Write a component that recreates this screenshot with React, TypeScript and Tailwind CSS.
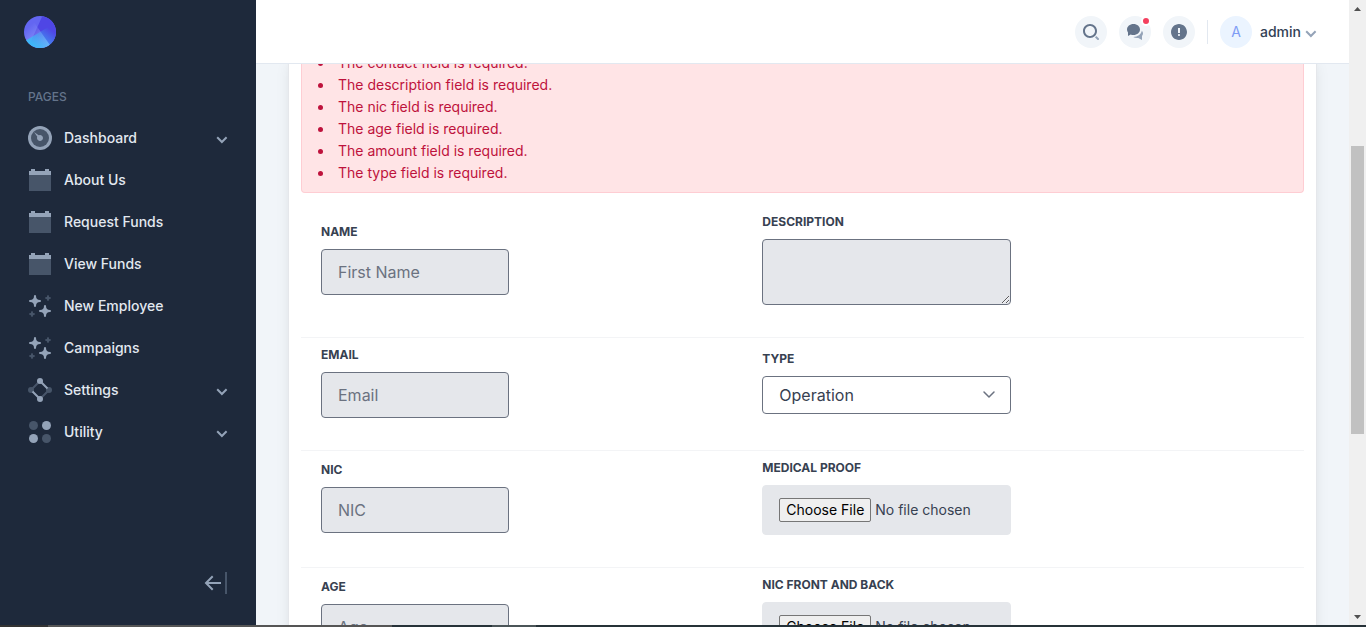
import React, { useId } from "react";

function Logo() {
  return (
    <svg width="32" height="32" viewBox="0 0 32 32" aria-hidden="true">
      <defs>
        <linearGradient x1="28.538%" y1="20.229%" x2="100%" y2="108.156%" id="logo-a">
          <stop stopColor="#A5B4FC" stopOpacity="0" offset="0%" />
          <stop stopColor="#A5B4FC" offset="100%" />
        </linearGradient>
        <linearGradient x1="88.638%" y1="29.267%" x2="22.42%" y2="100%" id="logo-b">
          <stop stopColor="#38BDF8" stopOpacity="0" offset="0%" />
          <stop stopColor="#38BDF8" offset="100%" />
        </linearGradient>
      </defs>
      <rect fill="#6366F1" width="32" height="32" rx="16" />
      <path d="M18.277.16C26.035 1.267 32 7.938 32 16c0 8.837-7.163 16-16 16a15.937 15.937 0 01-10.426-3.863L18.277.161z" fill="#4F46E5" />
      <path d="M7.404 2.503l18.339 26.19A15.93 15.93 0 0116 32C7.163 32 0 24.837 0 16 0 10.327 2.952 5.344 7.404 2.503z" fill="url(#logo-a)" />
      <path d="M2.223 24.14L29.777 7.86A15.926 15.926 0 0132 16c0 8.837-7.163 16-16 16-5.864 0-10.991-3.154-13.777-7.86z" fill="url(#logo-b)" />
    </svg>
  );
}

const LIGHT = "#94a3b8";
const DARK = "#475569";

const icons = {
  gauge: (
    <>
      <circle cx="12" cy="12" r="12" fill={LIGHT} />
      <circle cx="12" cy="12" r="9" fill={DARK} />
      <path fill={LIGHT} d="M12 15c-1.654 0-3-1.346-3-3 0-.462.113-.894.3-1.285L6 6l4.714 3.301A2.973 2.973 0 0112 9c1.654 0 3 1.346 3 3s-1.346 3-3 3z" />
    </>
  ),
  calendar: (
    <>
      <path fill={DARK} d="M1 3h22v20H1z" />
      <path fill={LIGHT} d="M21 3h2v4H1V3h2V1h4v2h10V1h4v2z" />
    </>
  ),
  sparkles: (
    <>
      <path fill={DARK} d="M20 7a.75.75 0 01-.75-.75 1.5 1.5 0 00-1.5-1.5.75.75 0 110-1.5 1.5 1.5 0 001.5-1.5.75.75 0 111.5 0 1.5 1.5 0 001.5 1.5.75.75 0 110 1.5 1.5 1.5 0 00-1.5 1.5A.75.75 0 0120 7zM4 23a.75.75 0 01-.75-.75 1.5 1.5 0 00-1.5-1.5.75.75 0 110-1.5 1.5 1.5 0 001.5-1.5.75.75 0 111.5 0 1.5 1.5 0 001.5 1.5.75.75 0 110 1.5 1.5 1.5 0 00-1.5 1.5A.75.75 0 014 23z" />
      <path fill={LIGHT} d="M17 23a1 1 0 01-1-1 4 4 0 00-4-4 1 1 0 010-2 4 4 0 004-4 1 1 0 012 0 4 4 0 004 4 1 1 0 010 2 4 4 0 00-4 4 1 1 0 01-1 1zM7 13a1 1 0 01-1-1 4 4 0 00-4-4 1 1 0 110-2 4 4 0 004-4 1 1 0 112 0 4 4 0 004 4 1 1 0 010 2 4 4 0 00-4 4 1 1 0 01-1 1z" />
    </>
  ),
  nodes: (
    <>
      <path stroke={DARK} strokeWidth="2" fill="none" d="M12 3L3 12M21 12l-9 9" />
      <circle cx="3" cy="12" r="3" fill={DARK} />
      <circle cx="21" cy="12" r="3" fill={DARK} />
      <path stroke={LIGHT} strokeWidth="2" fill="none" d="M12 3l7.5 7.5M12 21l-7.5-7.5" />
      <circle cx="12" cy="3" r="3" fill={LIGHT} />
      <circle cx="12" cy="21" r="3" fill={LIGHT} />
    </>
  ),
  dots: (
    <>
      <circle cx="5.5" cy="5.5" r="4.5" fill={DARK} />
      <circle cx="18.5" cy="18.5" r="4.5" fill={DARK} />
      <circle cx="18.5" cy="5.5" r="4.5" fill={LIGHT} />
      <circle cx="5.5" cy="18.5" r="4.5" fill={LIGHT} />
    </>
  ),
};

function Chevron() {
  return (
    <svg className="h-3 w-3 shrink-0 fill-[#94a3b8]" viewBox="0 0 12 12" aria-hidden="true">
      <path d="M5.9 11.4L.5 6l1.4-1.4 4 4 4-4L11.3 6z" />
    </svg>
  );
}

const links: { label: string; icon: keyof typeof icons; expandable?: boolean }[] = [
  { label: "Dashboard", icon: "gauge", expandable: true },
  { label: "About Us", icon: "calendar" },
  { label: "Request Funds", icon: "calendar" },
  { label: "View Funds", icon: "calendar" },
  { label: "New Employee", icon: "sparkles" },
  { label: "Campaigns", icon: "sparkles" },
  { label: "Settings", icon: "nodes", expandable: true },
  { label: "Utility", icon: "dots", expandable: true },
];

function Sidebar() {
  return (
    <aside className="flex w-64 shrink-0 flex-col bg-[#1e293b] p-4">
      <a href="#" aria-label="Home" className="mb-10 self-start pl-2">
        <Logo />
      </a>
      <h3 className="pl-3 text-xs leading-[18px] font-medium text-[#64748b] uppercase">Pages</h3>
      <nav className="mt-3 flex flex-col gap-0.5">
        {links.map((l) => (
          <a key={l.label} href="#" className="flex items-center px-3 py-2 text-[#e2e8f0]">
            <svg className="h-6 w-6 shrink-0" viewBox="0 0 24 24" aria-hidden="true">
              {icons[l.icon]}
            </svg>
            <span className="ml-3 grow text-sm font-medium">{l.label}</span>
            {l.expandable && <Chevron />}
          </a>
        ))}
      </nav>
      <button type="button" aria-label="Collapse sidebar" className="mt-auto self-end px-3 pb-4">
        <svg className="h-6 w-6 rotate-180" viewBox="0 0 24 24" aria-hidden="true">
          <path fill={LIGHT} d="M19.586 11l-5-5L16 4.586 23.414 12 16 19.414 14.586 18l5-5H7v-2z" />
          <path fill={DARK} d="M3 23H1V1h2z" />
        </svg>
      </button>
    </aside>
  );
}

function RoundButton({ label, children }: { label: string; children: React.ReactNode }) {
  return (
    <button type="button" aria-label={label} className="relative flex h-8 w-8 items-center justify-center rounded-full bg-[#f1f5f9]">
      {children}
    </button>
  );
}

function Header() {
  return (
    <header className="relative z-10 flex h-16 shrink-0 items-center justify-end gap-3 border-b border-[#e2e8f0] bg-white px-8">
      <RoundButton label="Search">
        <svg className="h-4 w-4" viewBox="0 0 16 16" aria-hidden="true">
          <path fill="#64748b" d="M7 14c-3.86 0-7-3.14-7-7s3.14-7 7-7 7 3.14 7 7-3.14 7-7 7zM7 2C4.243 2 2 4.243 2 7s2.243 5 5 5 5-2.243 5-5-2.243-5-5-5z" />
          <path fill={LIGHT} d="M15.707 14.293L13.314 11.9a8.019 8.019 0 01-1.414 1.414l2.393 2.393a.997.997 0 001.414 0 .999.999 0 000-1.414z" />
        </svg>
      </RoundButton>
      <RoundButton label="Notifications">
        <svg className="h-4 w-4" viewBox="0 0 16 16" aria-hidden="true">
          <path fill="#64748b" d="M6.5 0C2.91 0 0 2.462 0 5.5c0 1.075.37 2.074 1 2.922V12l2.699-1.542A7.454 7.454 0 006.5 11c3.59 0 6.5-2.462 6.5-5.5S10.09 0 6.5 0z" />
          <path fill={LIGHT} d="M16 9.5c0-.987-.429-1.897-1.147-2.639C14.124 10.348 10.66 13 6.5 13c-.103 0-.202-.018-.305-.021C7.231 13.617 8.556 14 10 14c.449 0 .886-.04 1.307-.11L15 16v-4h-.012C15.627 11.285 16 10.425 16 9.5z" />
        </svg>
        <span className="absolute top-0 right-0 h-2.5 w-2.5 rounded-full border-2 border-white bg-[#f43f5e]" />
      </RoundButton>
      <RoundButton label="Info">
        <svg className="h-4 w-4" viewBox="0 0 16 16" aria-hidden="true">
          <path fill="#64748b" d="M8 0C3.6 0 0 3.6 0 8s3.6 8 8 8 8-3.6 8-8-3.6-8-8-8zm0 12c-.6 0-1-.4-1-1s.4-1 1-1 1 .4 1 1-.4 1-1 1zm1-3H7V4h2v5z" />
        </svg>
      </RoundButton>
      <span className="h-6 w-px bg-[#e2e8f0]" />
      <button type="button" className="flex items-center">
        <span className="flex h-8 w-8 items-center justify-center rounded-full bg-[#ebf4ff] text-sm text-[#7f9cf5]">A</span>
        <span className="mr-1 ml-2 text-sm font-medium text-[#334155]">admin</span>
        <Chevron />
      </button>
    </header>
  );
}

const errors = ["contact", "description", "nic", "age", "amount", "type"];

const control = "block rounded border border-[#6b7280] bg-[#e5e7eb] px-4 text-base text-[#374151] placeholder:text-[#6b7280]";

function Field({ label, children }: { label: string; children: (id: string) => React.ReactNode }) {
  const id = useId();
  return (
    <div className="px-5 pt-1.5 pb-8">
      <label htmlFor={id} className="mb-1.5 block text-xs leading-[22px] font-bold text-[#374151] uppercase">
        {label}
      </label>
      {children(id)}
    </div>
  );
}

function TextField({ label, placeholder }: { label: string; placeholder: string }) {
  return (
    <Field label={label}>
      {(id) => <input id={id} type="text" placeholder={placeholder} className={`${control} h-[46px] w-[188px]`} />}
    </Field>
  );
}

function FileField({ label }: { label: string }) {
  return (
    <Field label={label}>
      {(id) => (
        <input
          id={id}
          type="file"
          className="block h-[50px] w-[249px] rounded border border-[#e5e7eb] bg-[#e5e7eb] px-4 py-3 text-sm leading-6 text-[#374151] file:mr-1 file:h-6 file:rounded-xs file:border file:border-solid file:border-[#767676] file:bg-[#efefef] file:px-1.5 file:text-sm file:leading-[22px] file:font-normal file:text-black"
        />
      )}
    </Field>
  );
}

function Row({ children }: { children: React.ReactNode }) {
  return <div className="grid grid-cols-[44%_1fr] items-center border-b border-[#f3f4f6]">{children}</div>;
}

function Scrollbar() {
  return (
    <div aria-hidden="true" className="flex w-[17px] shrink-0 flex-col items-center bg-[#f0f0f0]">
      <svg className="h-[17px] w-[17px] shrink-0" viewBox="0 0 17 17">
        <path fill="#505050" d="M5 11l3.500-4L12 11z" />
      </svg>
      <div className="grow-[129]" />
      <div className="w-[13px] grow-[288] bg-[#c1c1c1]" />
      <div className="grow-[176]" />
      <svg className="h-[17px] w-[17px] shrink-0" viewBox="0 0 17 17">
        <path fill="#505050" d="M5 5l3.500 4L12 5z" />
      </svg>
    </div>
  );
}

export default function App() {
  return (
    <div className="relative flex h-screen overflow-hidden bg-[#f1f5f9] font-['Inter',sans-serif] text-[#475569]">
      <Sidebar />
      <div className="flex min-w-0 grow flex-col">
        <Header />
        <main className="min-h-0 grow overflow-hidden px-8">
          <div className="border-x border-[#e5e7eb] bg-white px-3 shadow-lg">
            <ul className="-mt-3 rounded-b-sm border border-t-0 border-[#fecdd3] bg-[#ffe4e6] pb-2 pl-4 text-sm leading-[22px] text-[#be123c]">
              {errors.map((e) => (
                <li
                  key={e}
                  className="flex items-center before:mr-[15px] before:h-[5px] before:w-[5px] before:rounded-full before:bg-[#be123c]"
                >
                  The {e} field is required.
                </li>
              ))}
            </ul>
            <form className="mt-3">
              <Row>
                <TextField label="Name" placeholder="First Name" />
                <Field label="Description">
                  {(id) => <textarea id={id} className={`${control} h-[66px] w-[249px] resize py-2`} />}
                </Field>
              </Row>
              <Row>
                <TextField label="Email" placeholder="Email" />
                <Field label="Type">
                  {(id) => (
                    <div className="relative w-[249px]">
                      <select id={id} className="block h-[38px] w-full appearance-none rounded border border-[#6b7280] bg-white px-4 text-base text-[#374151]">
                        <option>Operation</option>
                      </select>
                      <svg className="pointer-events-none absolute top-2 right-3 h-5 w-5" viewBox="0 0 20 20" fill="none" aria-hidden="true">
                        <path stroke="#6b7280" strokeLinecap="round" strokeLinejoin="round" strokeWidth="1.5" d="M5 8l5 5 5-5" />
                      </svg>
                    </div>
                  )}
                </Field>
              </Row>
              <Row>
                <TextField label="NIC" placeholder="NIC" />
                <FileField label="Medical proof" />
              </Row>
              <Row>
                <TextField label="Age" placeholder="Age" />
                <FileField label="NIC front and back" />
              </Row>
            </form>
          </div>
        </main>
      </div>
      <Scrollbar />
      <div aria-hidden="true" className="absolute inset-x-0 bottom-0 z-20 flex h-0.5 bg-[#263238]">
        <div className="w-12 bg-[#333333]" />
        <div className="w-[344px] bg-[#555555]" />
        <div className="w-[100px] bg-[#263238]" />
        <div className="w-11 bg-[#4b5558]" />
      </div>
    </div>
  );
}
